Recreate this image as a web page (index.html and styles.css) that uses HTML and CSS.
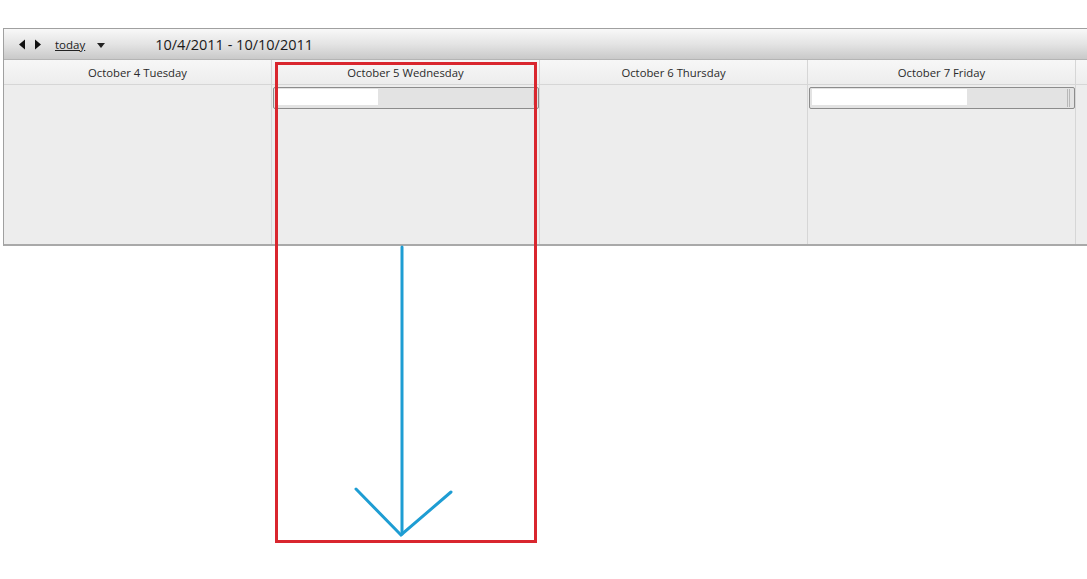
FILE: index.html
```html
<!DOCTYPE html>
<html lang="en">
<head>
    <meta charset="UTF-8">
    <title>Week view</title>
    <link rel="stylesheet" href="styles.css">
</head>
<body>

<div class="calendar">
    <div class="toolbar">
        <div class="nav-arrows">
            <svg width="8" height="11" viewBox="0 0 8 11"><path d="M0 5.5 L6 0.5 L6 10.5 Z" fill="#111"/></svg>
            <svg width="8" height="11" viewBox="0 0 8 11"><path d="M8 5.5 L2 0.5 L2 10.5 Z" fill="#111"/></svg>
        </div>
        <a class="today" href="#">today</a>
        <svg class="caret" width="8" height="5" viewBox="0 0 8 5"><path d="M0 0 L8 0 L4 5 Z" fill="#222"/></svg>
        <span class="range">10/4/2011 - 10/10/2011</span>
    </div>

    <div class="days">
        <div class="day">
            <div class="day-head">October 4 Tuesday</div>
            <div class="day-body"></div>
        </div>
        <div class="day">
            <div class="day-head">October 5 Wednesday</div>
            <div class="day-body">
                <div class="event">
                    <div class="event-fill short"></div>
                    <span class="grip"></span>
                </div>
            </div>
        </div>
        <div class="day">
            <div class="day-head">October 6 Thursday</div>
            <div class="day-body"></div>
        </div>
        <div class="day">
            <div class="day-head">October 7 Friday</div>
            <div class="day-body">
                <div class="event">
                    <div class="event-fill long"></div>
                    <span class="grip double"></span>
                </div>
            </div>
        </div>
        <div class="day">
            <div class="day-head"></div>
            <div class="day-body"></div>
        </div>
    </div>
</div>

<!-- annotation drawn on top of the screenshot -->
<svg class="markup" width="1087" height="579" viewBox="0 0 1087 579">
    <rect x="276.5" y="63.5" width="259" height="478" fill="none" stroke="#d9262e" stroke-width="3"/>
    <g stroke="#1e9dd3" stroke-width="3" stroke-linecap="round" fill="none">
        <path d="M402 247 L402 534"/>
        <path d="M356 489 L401 535 L451 492"/>
    </g>
</svg>

</body>
</html>
```

FILE: styles.css
```css
body {
    margin: 0;
    background-color: #ffffff;
    font-family: 'Open Sans', 'Noto Sans', sans-serif;
    color: #222222;
    overflow: hidden;
    width: 1087px;
    height: 579px;
}

.calendar {
    margin: 28px 0 0 3px;
    width: 1400px;
    border: 1px solid #a0a0a0;
    border-right: none;
    border-bottom: 2px solid #a9a9a9;
}

.toolbar {
    height: 30px;
    display: flex;
    align-items: center;
    padding-left: 15px;
    background: linear-gradient(#f8f8f8, #e4e4e4 50%, #c9c9c9);
    border-bottom: 1px solid #b4b4b4;
}

.nav-arrows {
    display: flex;
    gap: 6px;
    margin-top: 1px;
}

.today {
    margin-left: 14px;
    font-size: 11.5px;
    color: #222222;
    text-decoration: underline;
}

.caret {
    margin-left: 12px;
    margin-top: 2px;
}

.range {
    margin-left: 50px;
    font-size: 14.5px;
    color: #1a1a1a;
    margin-top: 1px;
}

.days {
    display: flex;
}

.day {
    width: 267px;
    flex: none;
    border-right: 1px solid #d6d6d6;
}

.day-head {
    height: 24px;
    line-height: 25px;
    text-align: center;
    font-size: 11.3px;
    color: #2a2a2a;
    background: linear-gradient(#f7f7f7, #ededed);
    border-bottom: 1px solid #d6d6d6;
}

.day-body {
    height: 159px;
    background-color: #ededed;
    padding-top: 2px;
    box-sizing: border-box;
}

.event {
    position: relative;
    width: 266px;
    height: 22px;
    margin-left: 1px;
    border: 1px solid #8c8c8c;
    border-radius: 2px;
    background-color: #e3e3e3;
    box-sizing: border-box;
    padding: 1px 0 0 2px;
}

.event-fill {
    height: 16px;
    background-color: #ffffff;
}

.event-fill.short {
    width: 102px;
}

.event-fill.long {
    width: 155px;
}

.grip {
    position: absolute;
    right: 4px;
    top: 2px;
    width: 1px;
    height: 15px;
    background-color: #d0d0d0;
}

.grip.double {
    width: 3px;
    background: none;
    border-left: 1px solid #b8b8b8;
    border-right: 1px solid #b8b8b8;
    box-sizing: border-box;
    top: 1px;
    height: 18px;
}

.markup {
    position: absolute;
    left: 0;
    top: 0;
    pointer-events: none;
}
```
